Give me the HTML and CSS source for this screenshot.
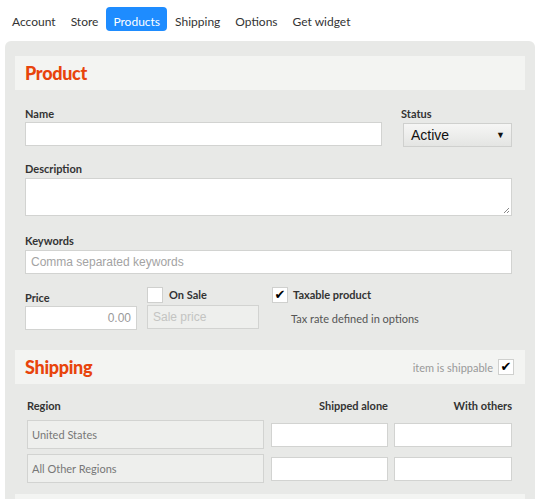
FILE: index.html
```html
<!DOCTYPE html>
<html>
<head>
<meta charset="utf-8">
<link rel="stylesheet" href="styles.css">
</head>
<body>
<nav class="tabs">
  <a class="tab">Account</a>
  <a class="tab">Store</a>
  <a class="tab active">Products</a>
  <a class="tab">Shipping</a>
  <a class="tab">Options</a>
  <a class="tab">Get widget</a>
</nav>
<div class="panel">
  <div class="section-head"><h2>Product</h2></div>
  <div class="form">
    <div class="row-name">
      <div class="field grow">
        <label class="lbl">Name</label>
        <div class="input"></div>
      </div>
      <div class="field status">
        <label class="lbl">Status</label>
        <div class="select"><span>Active</span><span class="arrow">▼</span></div>
      </div>
    </div>
    <div class="field mt desc">
      <label class="lbl">Description</label>
      <div class="textarea"><svg class="grip" width="7" height="7" viewBox="0 0 7 7"><path d="M6 1L1 6M6 4L4 6" stroke="#888" stroke-width="1"/></svg></div>
    </div>
    <div class="field mt kw">
      <label class="lbl">Keywords</label>
      <div class="input ph">Comma separated keywords</div>
    </div>
    <div class="row-price">
      <div class="field price">
        <label class="lbl price-lbl">Price</label>
        <div class="input num">0.00</div>
      </div>
      <div class="field sale">
        <div class="check-row"><span class="box"></span><span class="lbl">On Sale</span></div>
        <div class="input disabled">Sale price</div>
      </div>
      <div class="field tax">
        <div class="check-row"><span class="box">✔</span><span class="lbl">Taxable product</span></div>
        <div class="note">Tax rate defined in options</div>
      </div>
    </div>
  </div>
  <div class="section-head ship-head">
    <h2>Shipping</h2>
    <div class="shippable"><span>item is shippable</span><span class="box small">✔</span></div>
  </div>
  <div class="ship-table">
    <div class="th">Region</div>
    <div class="th right">Shipped alone</div>
    <div class="th right">With others</div>
    <div class="region">United States</div>
    <div class="input cell"></div>
    <div class="input cell"></div>
    <div class="region">All Other Regions</div>
    <div class="input cell"></div>
    <div class="input cell"></div>
  </div>
  <div class="section-head next"></div>
</div>
</body>
</html>
```
FILE: styles.css
```css
* { box-sizing: border-box; }
html, body { overflow: hidden; }
body {
  margin: 0;
  height: 499px;
  font-family: Lato, "Open Sans", sans-serif;
  color: #333;
  background: #fff;
}
.tabs {
  display: flex;
  gap: 1px;
  padding: 7px 0 0 5px;
}
.tab {
  height: 24px;
  line-height: 16px;
  padding: 7px 7px 0 7px;
  font-size: 12px;
  color: #333;
  border-radius: 4px;
}
.tab.active {
  background: #1e8cff;
  color: #fff;
}
.panel {
  margin: 10px 11px 0 5px;
  background: #e8e9e7;
  border-radius: 6px 6px 0 0;
  padding: 15px 10px 0 10px;
  height: 458px;
  overflow: hidden;
}
.section-head {
  height: 34px;
  background: #f3f4f2;
  padding: 0 10px;
  display: flex;
  align-items: center;
  justify-content: space-between;
}
.section-head h2 {
  margin: 0;
  font-size: 18px;
  font-weight: 900;
  color: #e8440c;
  letter-spacing: -0.3px;
}
.form {
  padding: 17px 13px 0 10px;
}
.lbl {
  display: block;
  font-size: 11px;
  font-weight: 700;
  color: #333;
  line-height: 14px;
}
.field { display: flex; flex-direction: column; }
.row-name { display: flex; gap: 19px; }
.grow { flex: 1; }
.grow .lbl { margin-bottom: 1px; }
.status { width: 111px; }
.input {
  height: 24px;
  background: #fff;
  border: 1px solid #d2d3d1;
  font-family: "Liberation Sans", Arial, sans-serif;
  font-size: 12px;
  line-height: 22px;
  padding: 0 5px;
}
.ph { color: #a3a3a3; }
.select {
  margin: 2px 0 0 2px;
  height: 24px;
  border: 1px solid #cfd0ce;
  background: linear-gradient(#f6f6f5, #e4e5e3);
  display: flex;
  align-items: center;
  justify-content: space-between;
  padding: 0 6px 0 7px;
  font-family: "Liberation Sans", Arial, sans-serif;
  font-size: 14px;
  color: #111;
}
.arrow { font-size: 9px; }
.mt { margin-top: 17px; }
.mt.desc { margin-top: 15px; }
.mt.kw { margin-top: 18px; }
.mt .lbl { margin-bottom: 2px; }
.textarea {
  height: 38px;
  background: #fff;
  border: 1px solid #d2d3d1;
  position: relative;
}
.grip { position: absolute; right: 1px; bottom: 1px; }
.row-price {
  display: flex;
  margin-top: 13px;
}
.price { width: 112px; }
.price-lbl { margin-top: 4px; margin-bottom: 1px; }
.num { text-align: right; color: #999; }
.sale { width: 112px; margin-left: 10px; }
.check-row { display: flex; align-items: center; height: 16px; gap: 6px; margin-bottom: 2px; }
.box {
  width: 16px;
  height: 16px;
  background: #fff;
  border: 1px solid #cfd0ce;
  font-size: 13px;
  line-height: 14px;
  text-align: center;
  color: #000;
  font-family: "DejaVu Sans", sans-serif;
}
.disabled { background: #eeefed; color: #c3c4c2; }
.tax { margin-left: 13px; }
.tax .check-row { gap: 5px; }
.note {
  font-size: 11px;
  color: #555;
  margin: 7px 0 0 19px;
}
.ship-head { margin-top: 20px; }
.shippable {
  display: flex;
  align-items: center;
  gap: 5px;
  font-size: 11px;
  color: #999;
  margin-right: 1px;
}
.box.small { width: 16px; height: 16px; }
.ship-table {
  display: grid;
  grid-template-columns: 237px 118px 118px;
  column-gap: 6px;
  padding: 15px 12px 0 12px;
  row-gap: 5px;
  align-items: center;
}
.th {
  font-size: 11px;
  font-weight: 700;
  color: #333;
  line-height: 14px;
  margin-bottom: 2px;
}
.th.right { text-align: right; }
.region {
  height: 29px;
  background: #eeefed;
  border: 1px solid #d2d3d1;
  font-size: 11px;
  color: #777;
  line-height: 27px;
  padding: 0 4px;
}
.cell { margin: 0; }
.ship-table .cell:nth-child(5), .ship-table .cell:nth-child(8) { margin-left: 1px; }
.next { margin-top: 11px; }
```
